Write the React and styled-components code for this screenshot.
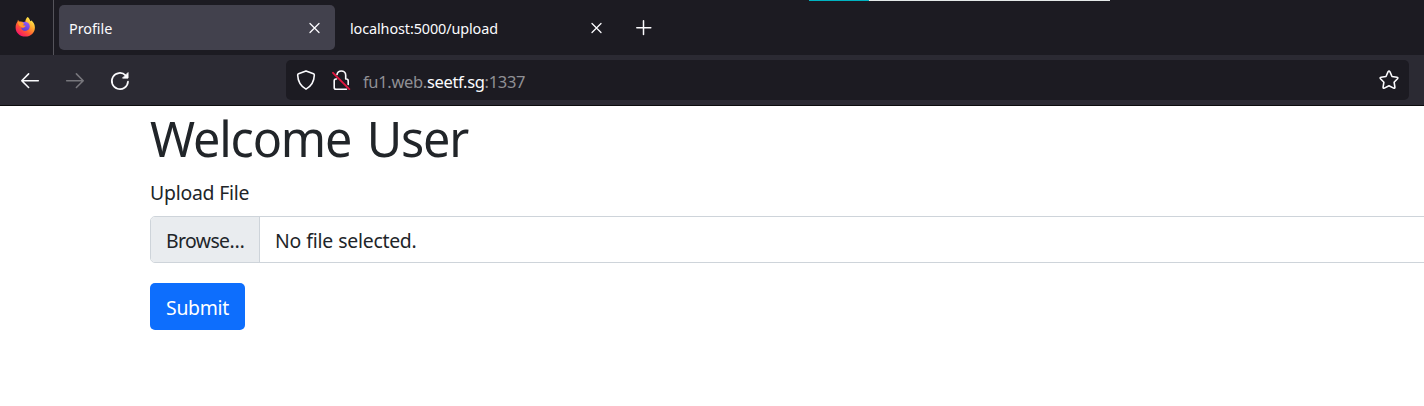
import React from "react";
import styled, { createGlobalStyle } from "styled-components";

const Global = createGlobalStyle`
  * { box-sizing: border-box; }
  body {
    margin: 0;
    background: #fff;
    color: #212529;
    font-family: "Noto Sans", "Open Sans", sans-serif;
    overflow: hidden;
  }
`;

const Window = styled.div`
  position: relative;
  width: 1424px;
  height: 406px;
  overflow: hidden;
`;

const ProgressStrip = styled.div`
  position: absolute;
  top: 0;
  left: 809px;
  width: 301px;
  height: 1px;
  background: #e4e9e8;
`;

const ProgressFill = styled.div`
  width: 60px;
  height: 1px;
  background: #00b3c1;
`;

const TabBar = styled.div`
  display: flex;
  align-items: flex-start;
  height: 55px;
  background: #1c1b22;
`;

const Pinned = styled.div`
  width: 54px;
  height: 55px;
  padding: 17px 0 0 15px;
  border-right: 1px solid #55545b;
`;

const Tab = styled.div`
  display: flex;
  align-items: center;
  justify-content: space-between;
  width: 276px;
  height: 45px;
  margin: 5px 0 0 ${(p) => (p.$active ? 5 : 6)}px;
  padding: 0 14px 0 ${(p) => (p.$active ? 10 : 9)}px;
  border-radius: 5px;
  background: ${(p) => (p.$active ? "#42414d" : "transparent")};
  color: #fbfbfe;
`;

const TabTitle = styled.span`
  font-size: 14.4px;
  line-height: 20px;
  letter-spacing: ${(p) => p.$spacing || 0}px;
  white-space: nowrap;
  padding-top: 2px;
`;

const Icon = styled.svg`
  display: block;
  flex: none;
  fill: none;
  stroke: ${(p) => p.$color || "#fbfbfe"};
  stroke-width: ${(p) => p.$weight || 1.5};
  stroke-linecap: round;
  stroke-linejoin: round;
`;

const NewTab = styled.div`
  padding: 20px 0 0 19px;
`;

const Toolbar = styled.div`
  display: flex;
  align-items: center;
  height: 51px;
  padding: 0 15px 0 20px;
  background: #2b2a33;
  border-bottom: 1px solid #0c0c0d;
`;

const NavButtons = styled.div`
  display: flex;
  gap: 25px;
  width: 266px;
  padding-top: 2px;
`;

const AddressBar = styled.div`
  display: flex;
  align-items: center;
  flex: 1;
  height: 40px;
  padding: 0 10px;
  border-radius: 5px;
  background: #1c1b22;
`;

const LockIcon = styled(Icon)`
  margin-left: 15px;
`;

const Address = styled.div`
  flex: 1;
  margin-left: 12px;
  padding-top: 3px;
  font-size: 16.5px;
  line-height: 24px;
  letter-spacing: -0.33px;
  color: #8f8f94;
`;

const Host = styled.span`
  color: #fbfbfe;
`;

const Page = styled.main`
  height: 300px;
  padding-left: 150px;
  background: #fff;
`;

const Heading = styled.h1`
  margin: 0;
  padding-top: 2px;
  font-size: 48.5px;
  font-weight: 400;
  line-height: 61px;
  letter-spacing: -1.15px;
  word-spacing: 4px;
  white-space: nowrap;
`;

const Label = styled.label`
  display: block;
  height: 30px;
  margin: 9px 0 8px;
  font-size: 19.4px;
  line-height: 30px;
  letter-spacing: -0.22px;
`;

const FileInput = styled.div`
  display: flex;
  width: 1350px;
  height: 47px;
  border: 1px solid #ced4da;
  border-radius: 5px;
  overflow: hidden;
  font-size: 19.4px;
  line-height: 48px;
  white-space: nowrap;
`;

const Browse = styled.div`
  width: 109px;
  padding-left: 15px;
  background: #e9ecef;
  border-right: 1px solid #ced4da;
  letter-spacing: -0.6px;
`;

const FileName = styled.div`
  padding-left: 15px;
  letter-spacing: -0.26px;
  word-spacing: 0.6px;
`;

const Submit = styled.button`
  display: block;
  width: 95px;
  height: 47px;
  margin: 20px 0 0;
  padding: 2px 0 0;
  border: 0;
  border-radius: 5px;
  background: #0d6efd;
  color: #fff;
  font: 400 19.4px/45px "Noto Sans", "Open Sans", sans-serif;
  letter-spacing: -0.3px;
`;

const Close = () => (
  <Icon width="13" height="14" viewBox="0 0 13 14" $weight={1.3}>
    <path d="M2 2.500 11 11.500M11 2.500 2 11.500" />
  </Icon>
);

const Firefox = () => (
  <svg width="21" height="21" viewBox="0 0 21 21" display="block">
    <defs>
      <linearGradient id="flame" x1="0.85" y1="0.1" x2="0.2" y2="0.95">
        <stop offset="0" stopColor="#fff44f" />
        <stop offset="0.35" stopColor="#ffa42e" />
        <stop offset="0.65" stopColor="#ff5634" />
        <stop offset="1" stopColor="#f5116d" />
      </linearGradient>
      <linearGradient id="globe" x1="0.7" y1="0" x2="0.3" y2="1">
        <stop offset="0" stopColor="#9059ff" />
        <stop offset="1" stopColor="#5b3dcc" />
      </linearGradient>
    </defs>
    <path
      fill="url(#flame)"
      d="M12.600 0c1.500.8 2.200 2.300 2.500 3.800l.9.400.300-.9c2 1.700 3.500 4 3.600 6.900.2 5.200-4.100 9.400-9.500 9.400C4.900 19.600.6 15.600.6 10.400c0-2.500.8-4.300 1.900-5.800L3 2.800l1.100 1.700c.9-.2 1.900-.1 2.900.3l3.300.4C10.200 3 11.200 1.300 12.600 0z"
    />
    <path
      fill="url(#globe)"
      d="M7 6.300c1-1.200 2.500-1.600 3.900-1.400 2.400.300 4 2.300 3.900 4.700-.1 2.600-2 4.400-4.500 4.400-2.400 0-4-1.500-4.200-3.500 1.600.8 3.200.300 3.900-.9.4-.7-.1-1-.9-1H7.500c0-.8.5-1 1.200-1.400z"
    />
    <path
      fill="#ff9a2b"
      d="M2.800 5.400c1.300-.9 2.800-.7 4.200.2L9.500 6.400c-.5.9-1.800 1-1.900 1.900 1 .6 2 .2 3.200.4-.7 1.400-2.500 1.700-4.200 1.500L4 8.600z"
    />
  </svg>
);

export default function App() {
  return (
    <Window>
      <Global />
      <TabBar>
        <Pinned>
          <Firefox />
        </Pinned>
        <Tab $active>
          <TabTitle $spacing={-0.05}>Profile</TabTitle>
          <Close />
        </Tab>
        <Tab>
          <TabTitle $spacing={-0.1}>localhost:5000/upload</TabTitle>
          <Close />
        </Tab>
        <NewTab>
          <Icon width="16" height="16" viewBox="0 0 16 16" $weight={1.5}>
            <path d="M.8 7.700H14.800M7.500 .8V14.600" />
          </Icon>
        </NewTab>
      </TabBar>
      <ProgressStrip>
        <ProgressFill />
      </ProgressStrip>
      <Toolbar>
        <NavButtons>
          <Icon width="20" height="20" viewBox="0 0 20 20" $weight={1.6}>
            <path d="M18.300 9.700H2M8.600 2.900 1.800 9.700l6.800 6.800" />
          </Icon>
          <Icon width="20" height="20" viewBox="0 0 20 20" $weight={1.6} $color="#77767c">
            <path d="M1.700 9.700H18M11.400 2.900l6.800 6.800-6.800 6.800" />
          </Icon>
          <Icon width="20" height="20" viewBox="0 0 20 20" $weight={1.7}>
            <path d="M15.600 4.300A8.100 8.100 0 1 0 18 10.600" />
            <path d="M18 2V7.100H12.900z" fill="#fbfbfe" strokeWidth="1" />
          </Icon>
        </NavButtons>
        <AddressBar>
          <Icon width="20" height="20" viewBox="0 0 20 20" $weight={1.6}>
            <path d="M10 .9 17.500 3.800Q18.400 4.200 18.300 5.200C18.100 11.300 15.500 16 10 19.100 4.500 16 1.900 11.300 1.700 5.200Q1.600 4.200 2.500 3.800z" />
          </Icon>
          <LockIcon width="20" height="20" viewBox="0 0 20 20" $weight={1.6}>
            <path d="M6 4.500C6.500 2.300 8.200 1 10.200 1c2.500 0 4.500 1.800 4.500 4.200V9H15.200Q17.200 9 17.200 11V14.500M5.500 9H5Q3.200 9 3.200 11v6.400Q3.200 19.200 5 19.200H15.500" />
            <path d="M2 2.800 18.300 19.200" stroke="#e3163f" strokeWidth="1.900" />
          </LockIcon>
          <Address>
            fu1.web.<Host>seetf.sg</Host>:1337
          </Address>
          <Icon width="20" height="20" viewBox="0 0 20 20" $weight={1.6}>
            <path d="M9 1.900Q10 .4 11 1.900L13 6.500l5 .7q1.500.4.500 1.500L15.100 12.200l.8 5q.1 1.500-1.300.9L10 15.700l-4.600 2.400q-1.400.6-1.300-.9l.8-5L1.500 8.700q-1-1.100.5-1.500L7 6.500z" />
          </Icon>
        </AddressBar>
      </Toolbar>
      <Page>
        <Heading>Welcome User</Heading>
        <Label>Upload File</Label>
        <FileInput>
          <Browse>Browse…</Browse>
          <FileName>No file selected.</FileName>
        </FileInput>
        <Submit>Submit</Submit>
      </Page>
    </Window>
  );
}
